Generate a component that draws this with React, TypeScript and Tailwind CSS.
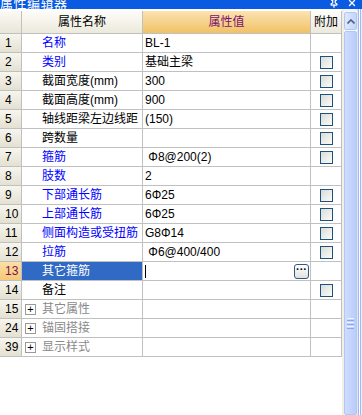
import { Pin, X } from 'lucide-react'

type Row = {
  no: string
  name: string
  tone: 'blue' | 'black' | 'gray'
  value?: string
  check?: boolean
  group?: boolean
  selected?: boolean
}

const rows: Row[] = [
  { no: '1', name: '名称', tone: 'blue', value: 'BL-1' },
  { no: '2', name: '类别', tone: 'blue', value: '基础主梁', check: true },
  { no: '3', name: '截面宽度(mm)', tone: 'black', value: '300', check: true },
  { no: '4', name: '截面高度(mm)', tone: 'black', value: '900', check: true },
  { no: '5', name: '轴线距梁左边线距', tone: 'black', value: '(150)', check: true },
  { no: '6', name: '跨数量', tone: 'black', check: true },
  { no: '7', name: '箍筋', tone: 'blue', value: ' Φ8@200(2)', check: true },
  { no: '8', name: '肢数', tone: 'blue', value: '2' },
  { no: '9', name: '下部通长筋', tone: 'blue', value: '6Φ25', check: true },
  { no: '10', name: '上部通长筋', tone: 'blue', value: '6Φ25', check: true },
  { no: '11', name: '侧面构造或受扭筋', tone: 'blue', value: 'G8Φ14', check: true },
  { no: '12', name: '拉筋', tone: 'blue', value: ' Φ6@400/400', check: true },
  { no: '13', name: '其它箍筋', tone: 'black', selected: true },
  { no: '14', name: '备注', tone: 'black', check: true },
  { no: '15', name: '其它属性', tone: 'gray', group: true },
  { no: '24', name: '锚固搭接', tone: 'gray', group: true },
  { no: '39', name: '显示样式', tone: 'gray', group: true },
]

const toneClass = {
  blue: 'text-[#0000ff]',
  black: 'text-black',
  gray: 'text-[#8a8a8a]',
}

function CheckBox() {
  return (
    <div className="w-[13px] h-[13px] border border-[#1c5180] bg-gradient-to-br from-[#dcdcd6] to-[#fbfbf9]" />
  )
}

export default function App() {
  return (
    <div
      className="w-[362px] h-[415px] bg-white overflow-hidden flex flex-col text-[12px]"
      style={{ fontFamily: '"Liberation Sans", "Noto Sans CJK SC", sans-serif' }}
    >
      {/* Title bar, top is cut off */}
      <div className="h-[9px] bg-[#0a5be2] flex items-end justify-between overflow-hidden shrink-0">
        <span className="text-white text-[13px] leading-[13px] mb-[-1px] tracking-[0.5px]">属性编辑器</span>
        <div className="flex items-end gap-[8px] pr-[5px] text-white">
          <Pin size={10} strokeWidth={3} className="mb-[1px]" />
          <X size={10} strokeWidth={3} className="mb-[1px]" />
        </div>
      </div>

      <div className="flex flex-1 min-h-0">
        {/* Grid */}
        <div className="w-[342px] pt-[2px]">
          {/* Header */}
          <div className="flex h-[23px] border-b border-[#c0c0c0]">
            <div className="w-[22px] border-r border-[#c0c0c0] bg-gradient-to-b from-[#fbfaf5] to-[#e9e6d8]" />
            <div className="w-[121px] border-r border-[#c0c0c0] bg-gradient-to-b from-[#fdfcf8] to-[#ece9dc] flex items-center justify-center text-black">
              属性名称
            </div>
            <div className="w-[168px] border-r border-[#c0c0c0] bg-gradient-to-b from-[#fbe3b0] to-[#f1c264] flex items-center justify-center text-[#7b0f72]">
              属性值
            </div>
            <div className="w-[31px] border-r border-[#c0c0c0] bg-gradient-to-b from-[#fdfcf8] to-[#ece9dc] flex items-center justify-center text-black">
              附加
            </div>
          </div>

          {rows.map((r) => (
            <div key={r.no} className="flex h-[19px] border-b border-[#c0c0c0]">
              <div
                className={
                  r.selected
                    ? 'w-[22px] border-r border-[#c0c0c0] bg-gradient-to-b from-[#fbdfa4] to-[#f5c878] text-[#7b1050] flex items-center pl-[5px]'
                    : 'w-[22px] border-r border-[#c0c0c0] bg-gradient-to-b from-[#f7f6ef] to-[#e4e1d1] text-black flex items-center pl-[5px]'
                }
              >
                {r.no}
              </div>
              <div
                className={
                  r.selected
                    ? 'w-[121px] border-r border-[#c0c0c0] bg-[#316ac5] text-white flex items-center pl-[20px]'
                    : `w-[121px] border-r border-[#c0c0c0] flex items-center ${r.group ? 'pl-[3px]' : 'pl-[20px]'} ${toneClass[r.tone]}`
                }
              >
                {r.group && (
                  <span className="w-[11px] h-[11px] border border-[#9a9a9a] bg-white text-black flex items-center justify-center text-[11px] leading-none mr-[6px]">
                    +
                  </span>
                )}
                <span className="whitespace-nowrap">{r.name}</span>
              </div>
              <div className="w-[168px] border-r border-[#c0c0c0] flex items-center pl-[2px] pr-[1px] text-black whitespace-pre">
                {r.value}
                {r.selected && (
                  <>
                    <span className="w-[1px] h-[13px] bg-black" />
                    <span className="ml-auto w-[15px] h-[15px] mt-[1px] rounded-[3px] border border-[#2a5a8c] bg-gradient-to-b from-white to-[#e2e2dc] flex items-center justify-center text-[11px] font-bold leading-none pb-[4px]">
                      ···
                    </span>
                  </>
                )}
              </div>
              <div className="w-[31px] border-r border-[#c0c0c0] flex items-center justify-center">
                {r.check && <CheckBox />}
              </div>
            </div>
          ))}
        </div>

        {/* Scrollbar */}
        <div className="w-[20px] flex bg-[#f3f6fd]">
          <div className="w-[2px] bg-[#f2f0e6]" />
          <div className="w-[13px] flex flex-col pt-[3px]">
            <div className="h-[18px] rounded-[2px] border border-[#b3c7f3] bg-gradient-to-r from-[#dfe8fd] to-[#c4d5fb] flex items-center justify-center">
              <svg width="8" height="5" viewBox="0 0 8 5">
                <path d="M0.5 4.5 L4 1 L7.5 4.5" fill="none" stroke="#4d6185" strokeWidth="1.6" />
              </svg>
            </div>
            <div className="flex-1 mt-[1px] rounded-[2px] border border-[#b3c7f3] bg-gradient-to-r from-[#cfdcfd] to-[#b9cdfa] flex flex-col items-center pt-[286px]">
              <div className="w-[7px] flex flex-col gap-[1px]">
                <div className="h-[1px] bg-[#eef3ff]" />
                <div className="h-[1px] bg-[#8ca8e8]" />
                <div className="h-[1px] bg-[#eef3ff]" />
                <div className="h-[1px] bg-[#8ca8e8]" />
                <div className="h-[1px] bg-[#eef3ff]" />
                <div className="h-[1px] bg-[#8ca8e8]" />
              </div>
            </div>
          </div>
          <div className="w-[5px] flex">
            <div className="w-[1px] bg-[#dde6fb]" />
            <div className="w-[1px] bg-[#9fb8ee]" />
            <div className="w-[1px] bg-white" />
            <div className="w-[1px] bg-[#9fb8ee]" />
            <div className="w-[1px] bg-[#e9effc]" />
          </div>
        </div>
      </div>
    </div>
  )
}
